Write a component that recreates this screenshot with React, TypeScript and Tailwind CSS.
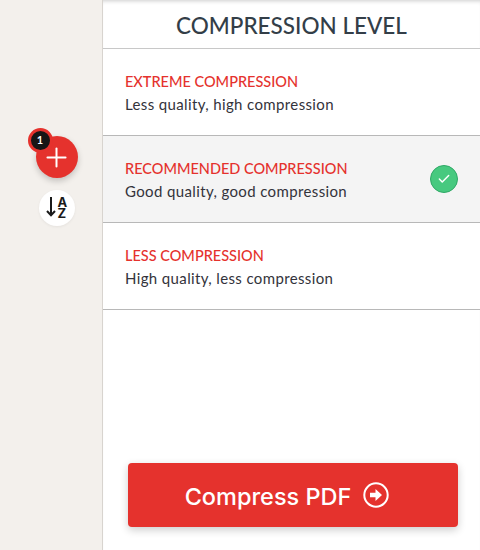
import { Check, Plus } from 'lucide-react'

const levels = [
  { title: 'EXTREME COMPRESSION', desc: 'Less quality, high compression', active: false },
  { title: 'RECOMMENDED COMPRESSION', desc: 'Good quality, good compression', active: true },
  { title: 'LESS COMPRESSION', desc: 'High quality, less compression', active: false },
]

const SortIcon = () => (
  <svg width="28" height="28" viewBox="0 0 28 28" fill="none">
    <path d="M8 3v18M4 17l4 4.300 4-4.300" stroke="#1a1a1a" strokeWidth="2" />
    <text x="14.500" y="13" fontSize="13" fontWeight="700" fontFamily="Inter, sans-serif" fill="#1a1a1a">A</text>
    <text x="14.500" y="24" fontSize="13" fontWeight="700" fontFamily="Inter, sans-serif" fill="#1a1a1a">Z</text>
  </svg>
)

const ArrowCircle = () => (
  <svg width="26" height="26" viewBox="0 0 26 26" fill="none">
    <circle cx="13" cy="13" r="11.700" stroke="#fff" strokeWidth="2" />
    <path d="M7 10.800h5.500V7L19 13l-6.500 6v-3.800H7z" fill="#fff" />
  </svg>
)

export default function App() {
  return (
    <div className="flex h-[550px] w-[480px] overflow-hidden bg-white font-['Lato',sans-serif]">
      <aside className="flex w-[103px] shrink-0 flex-col items-center border-r border-[#d8d4cf] bg-[#f3f0ec] pt-[136px] pl-[11px] pr-0">
        <div className="relative">
          <button className="flex h-[42px] w-[42px] items-center justify-center rounded-full bg-[#e5322d] shadow-[0_3px_6px_rgba(0,0,0,0.2)]">
            <Plus size={31} color="#fff" strokeWidth={2} absoluteStrokeWidth />
          </button>
          <span className="absolute -left-[8px] -top-[8px] flex h-[25px] w-[25px] items-center justify-center rounded-full border-[3px] border-[#e5322d] bg-[#161616] text-[11px] font-bold text-white">
            1
          </span>
        </div>
        <button className="mt-3 flex h-9 w-9 items-center justify-center rounded-full bg-white shadow-[0_1px_3px_rgba(0,0,0,0.06)]">
          <SortIcon />
        </button>
      </aside>

      <main className="flex min-w-0 flex-1 flex-col shadow-[inset_0_4px_4px_-3px_rgba(0,0,0,0.2)]">
        <h2 className="h-[49px] border-b border-[#c8c8c8] pt-[11px] text-center text-[22.5px] leading-[30px] font-medium text-[#333e48]">
          COMPRESSION LEVEL
        </h2>
        {levels.map((level) => (
          <div
            key={level.title}
            className={`flex h-[87px] items-center justify-between border-b border-[#b8b8b8] pl-[22px] pr-[22px] ${level.active ? 'bg-[#f4f4f4]' : 'bg-white'}`}
          >
            <div className="flex flex-col gap-[2px] pt-[1px]">
              <div className="text-[14.5px] leading-[20px] font-medium text-[#e5322d]">{level.title}</div>
              <div className="text-[15px] leading-[20px] tracking-[0.37px] text-[#33333b]">{level.desc}</div>
            </div>
            {level.active && (
              <span className="flex h-7 w-7 items-center justify-center rounded-full border border-[#2fa866] bg-[#47c97f]">
                <Check size={14} color="#fff" strokeWidth={2.5} />
              </span>
            )}
          </div>
        ))}
        <div className="mt-auto pb-[23px] pl-[25px] pr-[22px]">
          <button className="flex h-16 w-full items-center justify-center gap-3 rounded bg-[#e5322d] pr-3 text-[23.5px] font-medium text-white shadow-[0_3px_8px_rgba(0,0,0,0.2)] font-['Inter',sans-serif]">
            <span className="pt-1">Compress PDF</span>
            <ArrowCircle />
          </button>
        </div>
      </main>
    </div>
  )
}
